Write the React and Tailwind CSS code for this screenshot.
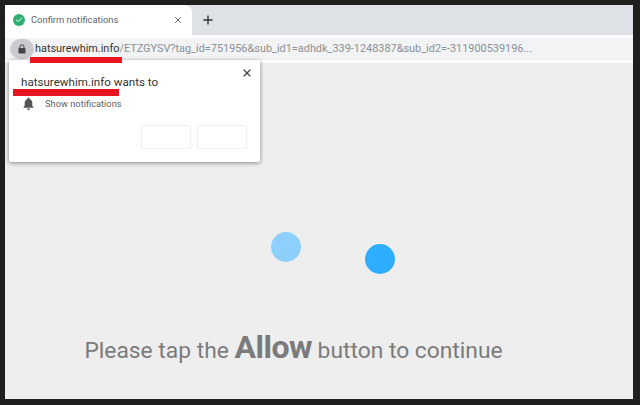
import React from "react";
import { X, Plus, Check } from "lucide-react";

const App = () => {
  return (
    <div className="w-[640px] h-[405px] overflow-hidden bg-[#1f1f1f] pt-[5px] pl-[5px] pr-[7px] pb-[6px] font-['Roboto',sans-serif]">
      <div className="relative w-full h-full bg-white flex flex-col">
        {/* tab strip */}
        <div className="h-[30px] bg-[#dee1e6] flex items-stretch shrink-0">
          <div className="w-[187px] bg-white rounded-tr-lg flex items-center pl-[8px] pr-[8px]">
            <span className="w-[12px] h-[12px] rounded-full bg-[#2eaf72] flex items-center justify-center shrink-0">
              <Check size={8} color="#fff" strokeWidth={3} />
            </span>
            <span className="ml-[6px] text-[9.4px] text-[#5f6368] whitespace-nowrap">Confirm notifications</span>
            <X size={10} color="#444" strokeWidth={2} className="ml-auto mr-[1px]" />
          </div>
          <div className="ml-[9px] flex items-center">
            <Plus size={14} color="#333" strokeWidth={2.4} />
          </div>
        </div>

        {/* address bar */}
        <div className="mt-[3px] h-[22px] bg-[#f1f3f4] flex items-center shrink-0 text-[10.9px] whitespace-nowrap">
          <span className="ml-[5px] w-[24px] h-[20px] rounded-full bg-[#c9cbce] flex items-center justify-center shrink-0">
            <svg width="8" height="10" viewBox="0 0 8 10">
              <path d="M2 4V2.8a2 2 0 0 1 4 0V4" fill="none" stroke="#444" strokeWidth="1" />
              <rect x="0.5" y="4" width="7" height="5.5" rx="0.8" fill="#444" />
            </svg>
          </span>
          <span className="ml-[1px] text-[#333]">hatsurewhim.info</span>
          <span className="text-[#8c9095]">/ETZGYSV?tag_id=751956&amp;sub_id1=adhdk_339-1248387&amp;sub_id2=-311900539196...</span>
        </div>

        {/* page */}
        <div className="mt-[3px] flex-1 bg-[#eeeeee] flex flex-col items-center">
          <div className="mt-[169px] ml-[28px] flex items-start gap-[64px]">
            <span className="w-[30px] h-[30px] rounded-full bg-[#8dd0fb]" />
            <span className="mt-[12px] w-[30px] h-[30px] rounded-full bg-[#2eaeff]" />
          </div>
          <p className="mt-[53px] ml-[-51px] text-[22.8px] leading-[40px] text-[#7b7b7b] whitespace-nowrap">
            Please tap the <span className="text-[32px] font-bold tracking-[-0.5px]">Allow</span> button to continue
          </p>
        </div>

        {/* permission popup */}
        <div className="absolute left-[4px] top-[55px] w-[251px] h-[102px] bg-white rounded-b-[2px] shadow-[0_1px_4px_rgba(0,0,0,0.45)] pl-[12px] pr-[12px]">
          <X size={12} color="#444" strokeWidth={2.4} className="absolute right-[7px] top-[7px]" />
          <div className="mt-[13px] text-[11.6px] leading-[18px] text-[#333] whitespace-nowrap">hatsurewhim.info wants to</div>
          <div className="mt-[6px] flex items-center text-[9.3px] text-[#5f6368] whitespace-nowrap">
            <svg width="11" height="13" viewBox="0 0 11 13" className="ml-[2px]">
              <path d="M5.5 0.5a1 1 0 0 1 1 1v.4c1.7.5 2.8 2 2.8 3.8v3l1.2 1.5v.6H.5v-.6l1.2-1.5v-3c0-1.800 1.100-3.300 2.800-3.800v-.4a1 1 0 0 1 1-1z" fill="#555" />
              <path d="M4 11.500h3a1.500 1.500 0 0 1-3 0z" fill="#555" />
            </svg>
            <span className="ml-[11px]">Show notifications</span>
          </div>
          <div className="mt-[14px] flex justify-end gap-[6px] mr-[1px]">
            <div className="w-[50px] h-[24px] rounded-[2px] border border-[#efefef] bg-white" />
            <div className="w-[50px] h-[24px] rounded-[2px] border border-[#efefef] bg-white" />
          </div>
        </div>

        {/* red underlines */}
        <div className="absolute left-[25px] top-[52px] w-[92px] h-[6px] bg-[#e8141f]" />
        <div className="absolute left-[8px] top-[84px] w-[106px] h-[7px] bg-[#e8141f]" />
      </div>
    </div>
  );
};

export default App;
